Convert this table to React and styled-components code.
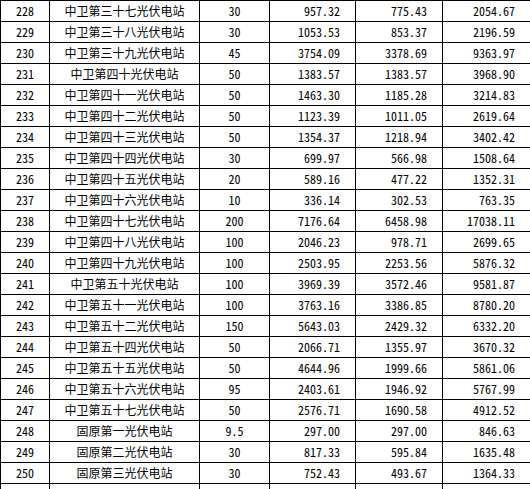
import React from 'react';
import styled, { createGlobalStyle } from 'styled-components';

const GlobalStyle = createGlobalStyle`
  html, body {
    margin: 0;
    padding: 0;
    background: #fff;
  }
`;

const rows = [
  ['228', '中卫第三十七光伏电站', '30', '957.32', '775.43', '2054.67'],
  ['229', '中卫第三十八光伏电站', '30', '1053.53', '853.37', '2196.59'],
  ['230', '中卫第三十九光伏电站', '45', '3754.09', '3378.69', '9363.97'],
  ['231', '中卫第四十光伏电站', '50', '1383.57', '1383.57', '3968.90'],
  ['232', '中卫第四十一光伏电站', '50', '1463.30', '1185.28', '3214.83'],
  ['233', '中卫第四十二光伏电站', '50', '1123.39', '1011.05', '2619.64'],
  ['234', '中卫第四十三光伏电站', '50', '1354.37', '1218.94', '3402.42'],
  ['235', '中卫第四十四光伏电站', '30', '699.97', '566.98', '1508.64'],
  ['236', '中卫第四十五光伏电站', '20', '589.16', '477.22', '1352.31'],
  ['237', '中卫第四十六光伏电站', '10', '336.14', '302.53', '763.35'],
  ['238', '中卫第四十七光伏电站', '200', '7176.64', '6458.98', '17038.11'],
  ['239', '中卫第四十八光伏电站', '100', '2046.23', '978.71', '2699.65'],
  ['240', '中卫第四十九光伏电站', '100', '2503.95', '2253.56', '5876.32'],
  ['241', '中卫第五十光伏电站', '100', '3969.39', '3572.46', '9581.87'],
  ['242', '中卫第五十一光伏电站', '100', '3763.16', '3386.85', '8780.20'],
  ['243', '中卫第五十二光伏电站', '150', '5643.03', '2429.32', '6332.20'],
  ['244', '中卫第五十四光伏电站', '50', '2066.71', '1355.97', '3670.32'],
  ['245', '中卫第五十五光伏电站', '50', '4644.96', '1999.66', '5861.06'],
  ['246', '中卫第五十六光伏电站', '95', '2403.61', '1946.92', '5767.99'],
  ['247', '中卫第五十七光伏电站', '50', '2576.71', '1690.58', '4912.52'],
  ['248', '固原第一光伏电站', '9.5', '297.00', '297.00', '846.63'],
  ['249', '固原第二光伏电站', '30', '817.33', '595.84', '1635.48'],
  ['250', '固原第三光伏电站', '30', '752.43', '493.67', '1364.33'],
  ['', '', '', '', '', ''],
];

const colWidths = [49, 150, 70, 86, 87, 88];

const Table = styled.table`
  border-collapse: collapse;
  table-layout: fixed;
  width: 530px;
  color: #000;
`;

const Cell = styled.td`
  border: 1px solid #000;
  height: 20px;
  padding: 0;
  font-size: 12px;
  line-height: 20px;
  white-space: nowrap;
  overflow: hidden;
  text-align: ${p => (p.$num ? 'right' : 'center')};
  padding-right: ${p => (p.$num ? '15px' : '0')};
  font-family: ${p =>
    p.$cjk
      ? '"Noto Sans CJK SC", sans-serif'
      : '"Noto Sans Mono CJK SC", "DejaVu Sans Mono", monospace'};
`;

export default function App() {
  return (
    <>
      <GlobalStyle />
      <Table>
        <colgroup>
          {colWidths.map((w, i) => (
            <col key={i} style={{ width: w }} />
          ))}
        </colgroup>
        <tbody>
          {rows.map((r, i) => (
            <tr key={i}>
              <Cell>{r[0]}</Cell>
              <Cell $cjk>{r[1]}</Cell>
              <Cell>{r[2]}</Cell>
              <Cell $num>{r[3]}</Cell>
              <Cell $num>{r[4]}</Cell>
              <Cell $num>{r[5]}</Cell>
            </tr>
          ))}
        </tbody>
      </Table>
    </>
  );
}
